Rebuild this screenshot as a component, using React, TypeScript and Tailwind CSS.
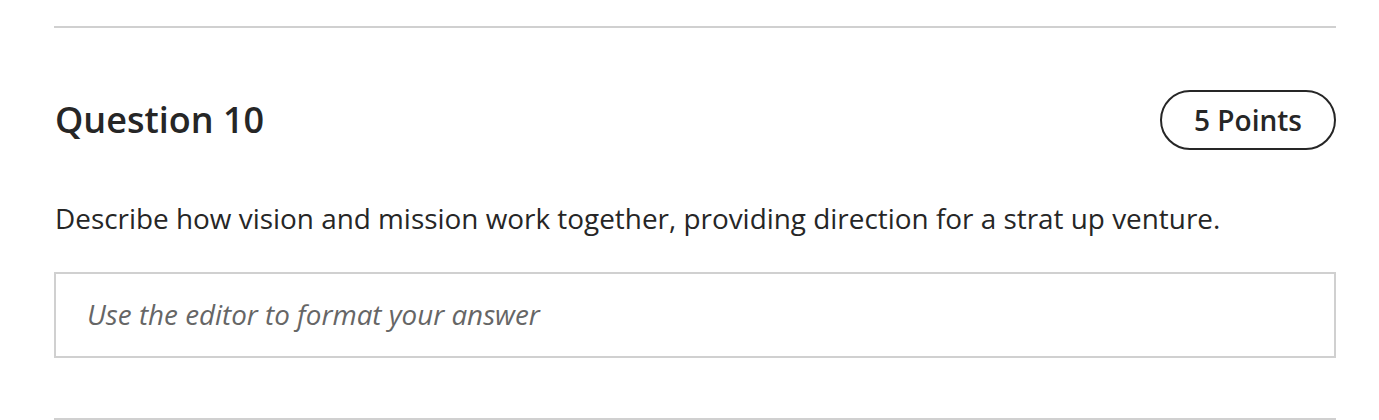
export default function App() {
  return (
    <div className="w-[1379px] h-[420px] bg-white overflow-hidden font-['Open_Sans',sans-serif] text-[#262626]">
      <div className="ml-[54px] mr-[43px] pt-[26px]">
        <div className="border-t-2 border-[#d0d0d0]" />
        <div className="flex items-center justify-between mt-[62px]">
          <h2 className="text-[36px] font-semibold leading-none ml-px">Question 10</h2>
          <div className="h-[60px] w-[176px] rounded-full border-2 border-[#262626] flex items-center justify-center text-[28px] font-semibold">
            5 Points
          </div>
        </div>
        <p className="mt-[55px] text-[27.9px] leading-none ml-px">
          Describe how vision and mission work together, providing direction for a strat up venture.
        </p>
        <div className="mt-[39px] h-[86px] border-2 border-[#d0d0d0] flex items-center px-[31px]">
          <span className="italic text-[27.8px] text-[#666]">Use the editor to format your answer</span>
        </div>
        <div className="mt-[60px] border-t-2 border-[#d0d0d0]" />
      </div>
    </div>
  );
}
